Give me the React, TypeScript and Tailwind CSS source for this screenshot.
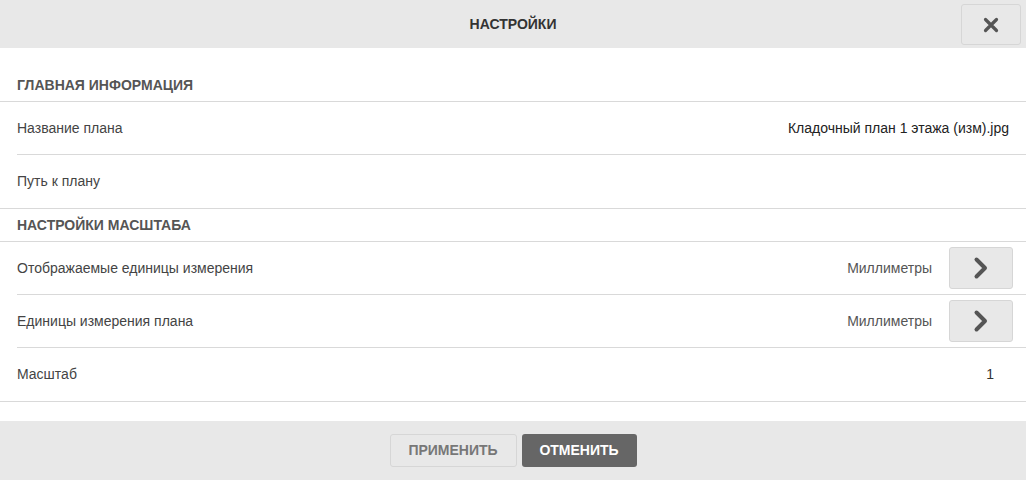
import React from "react";

function Chevron() {
  return (
    <svg width="16" height="24" viewBox="0 0 16 24" fill="none">
      <path d="M3.5 3.5 L12 12 L3.5 20.5" stroke="#555" strokeWidth="4" strokeLinecap="round" strokeLinejoin="round" />
    </svg>
  );
}

function Row({ label, value, h }: { label: string; value: string; h: string }) {
  return (
    <div className={`${h} ml-[17px] border-b border-[#d9d9d9] flex items-center`}>
      <span className="text-[14px] text-[#444] flex-1">{label}</span>
      <span className="text-[14px] text-[#555]">{value}</span>
      <button className="ml-[17px] mr-[13px] w-[64px] h-[42px] flex items-center justify-center bg-[#e8e8e8] border border-[#d6d6d6] rounded-[3px]">
        <Chevron />
      </button>
    </div>
  );
}

export default function App() {
  return (
    <div className="w-[1026px] h-[480px] flex flex-col bg-white" style={{ fontFamily: '"Liberation Sans", Arial, sans-serif' }}>
      <div className="h-[48px] bg-[#e8e8e8] relative flex items-center justify-center">
        <span className="text-[14px] font-bold text-[#333]">НАСТРОЙКИ</span>
        <button className="absolute right-[5px] top-[4px] w-[60px] h-[41px] border border-[#d6d6d6] rounded-[3px] flex items-center justify-center">
          <svg width="16" height="16" viewBox="0 0 16 16">
            <path d="M2.5 2.5 L13.5 13.5 M13.5 2.5 L2.5 13.5" stroke="#555" strokeWidth="3.2" strokeLinecap="round" />
          </svg>
        </button>
      </div>
      <div className="flex-1 flex flex-col">
        <div className="mt-[20px] h-[34px] flex items-center pt-[1px] px-[17px] border-b border-[#d9d9d9]">
          <span className="text-[14px] font-bold text-[#555]">ГЛАВНАЯ ИНФОРМАЦИЯ</span>
        </div>
        <div className="h-[53px] ml-[17px] border-b border-[#d9d9d9] flex items-center">
          <span className="text-[14px] text-[#444] flex-1">Название плана</span>
          <span className="text-[14px] text-[#222] mr-[17px]">Кладочный план 1 этажа (изм).jpg</span>
        </div>
        <div className="h-[54px] pl-[17px] border-b border-[#d9d9d9] flex items-center">
          <span className="text-[14px] text-[#444]">Путь к плану</span>
        </div>
        <div className="h-[33px] flex items-center px-[17px] border-b border-[#d9d9d9]">
          <span className="text-[14px] font-bold text-[#555]">НАСТРОЙКИ МАСШТАБА</span>
        </div>
        <Row label="Отображаемые единицы измерения" value="Миллиметры" h="h-[53px]" />
        <Row label="Единицы измерения плана" value="Миллиметры" h="h-[53px]" />
        <div className="h-[54px] pl-[17px] border-b border-[#d9d9d9] flex items-center">
          <span className="text-[14px] text-[#444] flex-1">Масштаб</span>
          <span className="text-[14px] text-[#333] mr-[32px]">1</span>
        </div>
      </div>
      <div className="h-[59px] bg-[#e8e8e8] flex items-center justify-center gap-[5px]">
        <button className="w-[127px] h-[33px] border border-[#d6d6d6] rounded-[3px] text-[14px] font-bold text-[#777]">ПРИМЕНИТЬ</button>
        <button className="w-[115px] h-[33px] bg-[#666] rounded-[3px] text-[14px] font-bold text-white">ОТМЕНИТЬ</button>
      </div>
    </div>
  );
}
